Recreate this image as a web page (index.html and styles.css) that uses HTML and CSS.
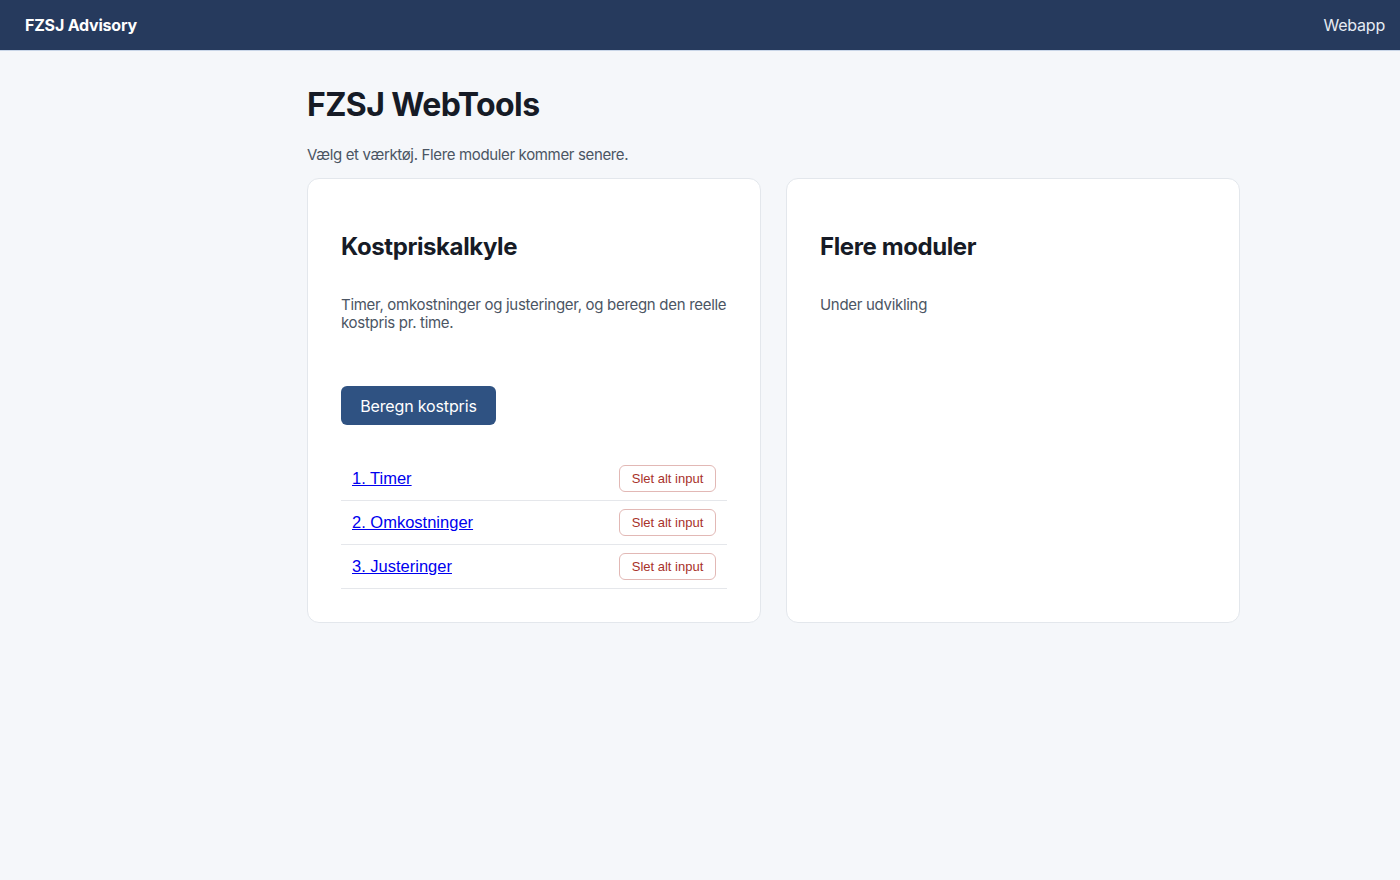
FILE: index.html
```html
<!DOCTYPE html>
<html lang="da">
<head>
<meta charset="utf-8">
<title>FZSJ WebTools</title>
<link rel="stylesheet" href="styles.css">
</head>
<body>
<header class="topbar">
  <div class="brand">FZSJ Advisory</div>
  <div class="app-label">Webapp</div>
</header>
<main class="container">
  <h1 class="page-title">FZSJ WebTools</h1>
  <p class="page-sub">Vælg et værktøj. Flere moduler kommer senere.</p>
  <div class="cards">
    <section class="card">
      <h2 class="card-title">Kostpriskalkyle</h2>
      <p class="card-text">Timer, omkostninger og justeringer, og beregn den reelle kostpris pr. time.</p>
      <button class="primary-btn">Beregn kostpris</button>
      <ul class="steps">
        <li class="step"><a href="#" class="step-link">1. Timer</a><button class="clear-btn">Slet alt input</button></li>
        <li class="step"><a href="#" class="step-link">2. Omkostninger</a><button class="clear-btn">Slet alt input</button></li>
        <li class="step"><a href="#" class="step-link">3. Justeringer</a><button class="clear-btn">Slet alt input</button></li>
      </ul>
    </section>
    <section class="card">
      <h2 class="card-title">Flere moduler</h2>
      <p class="card-text">Under udvikling</p>
    </section>
  </div>
</main>
</body>
</html>
```
FILE: styles.css
```css
* { box-sizing: border-box; }
body {
  margin: 0;
  background: #f5f7fa;
  font-family: Inter, "Noto Sans", sans-serif;
  color: #111827;
}
.topbar {
  height: 51px;
  background: #263a5d;
  display: flex;
  align-items: center;
  justify-content: space-between;
  padding: 0 15px 0 25px;
  border-bottom: 1px solid #c9d6e8;
}
.brand {
  color: #ffffff;
  font-weight: 700;
  font-size: 16px;
  letter-spacing: -0.2px;
}
.app-label {
  color: #e5ebf3;
  font-size: 16px;
  letter-spacing: -0.2px;
}
.container {
  width: 933px;
  margin: 0 0 0 307px;
  padding-top: 34px;
}
.page-title {
  margin: 0;
  font-size: 32px;
  line-height: 40px;
  font-weight: 700;
  letter-spacing: -0.6px;
  color: #161b26;
}
.page-sub {
  margin: 20px 0 13px;
  font-size: 15px;
  line-height: 20px;
  letter-spacing: -0.35px;
  color: #4b5563;
}
.cards {
  display: grid;
  grid-template-columns: 1fr 1fr;
  gap: 25px;
}
.card {
  background: #ffffff;
  border: 1px solid #e3e7ec;
  border-radius: 12px;
  padding: 33px 33px 32px;
  min-height: 445px;
}
.card-title {
  margin: 20px 0 0;
  font-size: 24px;
  line-height: 30px;
  font-weight: 700;
  letter-spacing: -0.4px;
  color: #161b26;
}
.card-text {
  margin: 34px 0 0;
  font-size: 15px;
  line-height: 18px;
  letter-spacing: -0.3px;
  color: #4b5563;
}
.primary-btn {
  margin-top: 54px;
  height: 39px;
  width: 155px;
  border: none;
  border-radius: 6px;
  background: #2f5282;
  color: #ffffff;
  font-family: Inter, "Noto Sans", sans-serif;
  font-size: 16px;
  letter-spacing: -0.15px;
  cursor: pointer;
}
.steps {
  list-style: none;
  margin: 32px 0 0;
  padding: 0;
}
.step {
  height: 44px;
  display: flex;
  align-items: center;
  justify-content: space-between;
  padding: 0 11px;
  border-bottom: 1px solid #e5e7eb;
}
.step-link {
  font-family: "Liberation Sans", Arial, sans-serif;
  font-size: 16.5px;
  color: #0000ee;
  text-decoration: underline;
}
.clear-btn {
  height: 27px;
  width: 97px;
  padding: 0;
  background: #ffffff;
  border: 1px solid #e2b8b5;
  border-radius: 6px;
  color: #a8322b;
  font-family: "Liberation Sans", Arial, sans-serif;
  font-size: 13px;
  cursor: pointer;
}
```
